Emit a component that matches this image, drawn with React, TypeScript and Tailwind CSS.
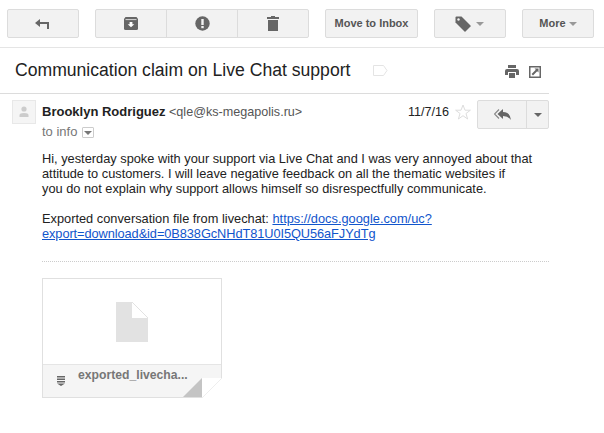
const btn = "h-[29px] flex items-center justify-center bg-[#f2f2f2] border border-[#dcdcdc] rounded-[2px]";

function Caret({ color = "#999" }: { color?: string }) {
  return <span className="inline-block w-0 h-0 border-x-[4px] border-x-transparent border-t-[4px]" style={{ borderTopColor: color }} />;
}

export default function App() {
  return (
    <div className="w-[604px] h-[433px] bg-white overflow-hidden text-[#222] font-['Liberation_Sans',Arial,sans-serif]">
      <div className="h-[48px] border-b border-[#e5e5e5] pt-[9px] pl-[7px] flex">
        <div className={`${btn} w-[72px] pr-[2px]`}>
          <svg width="14" height="10" viewBox="0 0 14 10"><path d="M0 4 L5 0 V3 H14 V10 H12 V5 H5 V8 Z" fill="#666" /></svg>
        </div>
        <div className={`${btn} ml-[16px] w-[214px]`}>
          <div className="h-full w-[70px] flex items-center justify-center">
            <svg width="14" height="13" viewBox="0 0 14 13"><path d="M1.5 0H12.5L14 2V11.5Q14 13 12.5 13H1.5Q0 13 0 11.5V2Z" fill="#666" /><path d="M1.5 2.6H12.5" stroke="#f2f2f2" strokeWidth="0.8" /><path d="M5.6 5H8.4V7.2H10.3L7 10.3L3.7 7.2H5.6Z" fill="#fff" /></svg>
          </div>
          <div className="h-full w-[72px] flex items-center justify-center border-x border-[#dcdcdc]">
            <svg width="15" height="15" viewBox="0 0 15 15"><circle cx="7.5" cy="7.5" r="7.2" fill="#666" /><rect x="6.3" y="3" width="2.4" height="6" fill="#f2f2f2" /><rect x="6.3" y="10" width="2.4" height="2.2" fill="#f2f2f2" /></svg>
          </div>
          <div className="h-full w-[70px] flex items-center justify-center">
            <svg width="12" height="15" viewBox="0 0 12 15"><path d="M4 0H8V1H12V3H0V1H4Z" fill="#666" /><path d="M1 4H11V15H1Z" fill="#666" /></svg>
          </div>
        </div>
        <div className={`${btn} ml-[16px] w-[93px] text-[11px] font-bold text-[#555]`}>Move to Inbox</div>
        <div className={`${btn} ml-[16px] w-[72px] gap-[5px] pr-[2px]`}>
          <svg width="16" height="16" viewBox="0 0 16 16"><path d="M0.5 3V1.5Q0.5 0.5 1.5 0.5H6.5L15.5 9.5Q16 10 15.5 10.5L10.5 15.5Q10 16 9.5 15.5L0.5 6.5Z" fill="#666" /><circle cx="3.5" cy="3.5" r="1.2" fill="#f2f2f2" /></svg>
          <Caret />
        </div>
        <div className={`${btn} ml-[16px] w-[72px] gap-[3px] text-[11px] font-bold text-[#555]`}>
          More
          <Caret />
        </div>
      </div>

      <div className="h-[46px] w-[549px] border-b border-[#dcdcdc] flex items-center pl-[15px] pb-[1px]">
        <span className="text-[17.6px] leading-[24px] text-[#222] whitespace-nowrap">Communication claim on Live Chat support</span>
        <svg className="ml-[23px] mt-[1px] shrink-0" width="15" height="11" viewBox="0 0 15 11"><path d="M0.5 0.5H10.5L14 5.5L10.5 10.5H0.5Z" fill="none" stroke="#e4e4e4" /></svg>
        <svg className="ml-[117px] mt-[3px] shrink-0" width="14" height="13" viewBox="0 0 14 13"><path d="M3 0H11V3H3ZM0 6Q0 4 2 4H12Q14 4 14 6V10H11V7H3V10H0ZM4 8H10V13H4Z" fill="#666" /></svg>
        <svg className="ml-[10px] mt-[3px] shrink-0" width="12" height="12" viewBox="0 0 12 12"><path d="M0 0H12V12H0Z" fill="#666" /><path d="M1.5 1.5H10.5V10.5H1.5Z" fill="#fff" /><path d="M5.5 2.5H9.5V6.5L8.2 5.2L4 9.4L2.6 8L6.8 3.8Z" fill="#666" /></svg>
      </div>

      <div className="w-[549px] pl-[12px] flex pt-[6px]">
        <div className="w-[24px] h-[24px] bg-[#f5f5f5] border border-[#e8e8e8] flex items-center justify-center shrink-0">
          <svg width="12" height="12" viewBox="0 0 12 12"><circle cx="6" cy="3" r="2.6" fill="#ccc" /><path d="M1.5 11V9Q1.5 7 6 7T10.5 9V11Z" fill="#ccc" /></svg>
        </div>
        <div className="ml-[6px] flex-1 min-w-0">
          <div className="flex h-[29px]">
            <div className="flex-1 text-[12.6px] pt-[5px] leading-[14px] whitespace-nowrap">
              <span className="font-bold text-[13px] text-[#222]">Brooklyn Rodriguez</span>
              <span className="text-[#555]"> &lt;qle@ks-megapolis.ru&gt;</span>
            </div>
            <span className="text-[12.6px] leading-[14px] mt-[5px] text-[#222]">11/7/16</span>
            <svg className="ml-[6px] mt-[4px] shrink-0" width="16" height="16" viewBox="0 0 16 16"><path d="M8 1L10 6.2H15.4L11 9.5L12.6 15L8 11.7L3.4 15L5 9.5L0.6 6.2H6Z" fill="none" stroke="#ddd" /></svg>
            <div className={`${btn} ml-[6px] w-[72px] shrink-0`}>
              <div className="flex-1 h-full flex items-center justify-center">
                <svg width="17" height="12" viewBox="0 0 17 12"><path d="M5 0.5L0.5 5L5 9.5" fill="none" stroke="#888" strokeWidth="1.2" /><path d="M3.5 5L9 0V3Q16 3 17 11Q14.5 7 9 7V10Z" fill="#666" /></svg>
              </div>
              <div className="w-[22px] h-full border-l border-[#dcdcdc] flex items-center justify-center"><Caret color="#666" /></div>
            </div>
          </div>
          <div className="flex items-center text-[13px] text-[#777] leading-[14px] -mt-[4px] h-[14px]">
            to info
            <span className="ml-[5px] w-[12px] h-[11px] border border-[#ccc] rounded-[1px] flex items-center justify-center mt-[1px]"><Caret color="#777" /></span>
          </div>
          <div className="text-[12.8px] leading-[15px] text-[#222] mt-[12px] w-[507px] h-[111px] border-b border-dotted border-[#ccc]">
            <p className="w-[500px]">Hi, yesterday spoke with your support via Live Chat and I was very annoyed about that attitude to customers. I will leave negative feedback on all the thematic websites if<br />you do not explain why support allows himself so disrespectfully communicate.</p>
            <p className="mt-[15px] w-[400px]">Exported conversation file from livechat: <a className="text-[#15c] underline" href="#">https://docs.google.com/uc?</a><br /><a className="text-[#15c] underline tracking-[-0.08px]" href="#">export=download&amp;id=0B838GcNHdT81U0I5QU56aFJYdTg</a></p>
          </div>
          <div className="mt-[16px] relative w-[180px] h-[120px] border border-[#e0e0e0] flex flex-col">
            <div className="h-[86px] flex items-center justify-center border-b border-[#e5e5e5] pt-[1px]">
              <svg width="32" height="40" viewBox="0 0 32 40"><path d="M0 0H16V16H32V40H0Z" fill="#e2e2e2" /><path d="M16 0L32 16" stroke="#e2e2e2" /></svg>
            </div>
            <div className="flex-1 bg-[#f5f5f5] flex pl-[14px]">
              <svg className="mt-[11px] shrink-0" width="8" height="10" viewBox="0 0 8 10"><path d="M0 0H8V1.5H0ZM0 2.5H8V4H0ZM0 5H8V6.5H0ZM0 7.5H8L4 10Z" fill="#666" /></svg>
              <span className="ml-[13px] mt-[3px] text-[12.2px] font-bold text-[#777] leading-[14px]">exported_livecha...</span>
            </div>
            <svg className="absolute right-[-1px] bottom-[-1px]" width="40" height="20" viewBox="0 0 40 20"><path d="M20 0H40V20H20Z" fill="#fff" /><path d="M20 20L20 0L0 20Z" fill="#c4c4c4" /><path d="M20 20L40 0" stroke="#eee" /><path d="M0 19.5H20" stroke="#e0e0e0" /></svg>
          </div>
        </div>
      </div>
    </div>
  );
}
